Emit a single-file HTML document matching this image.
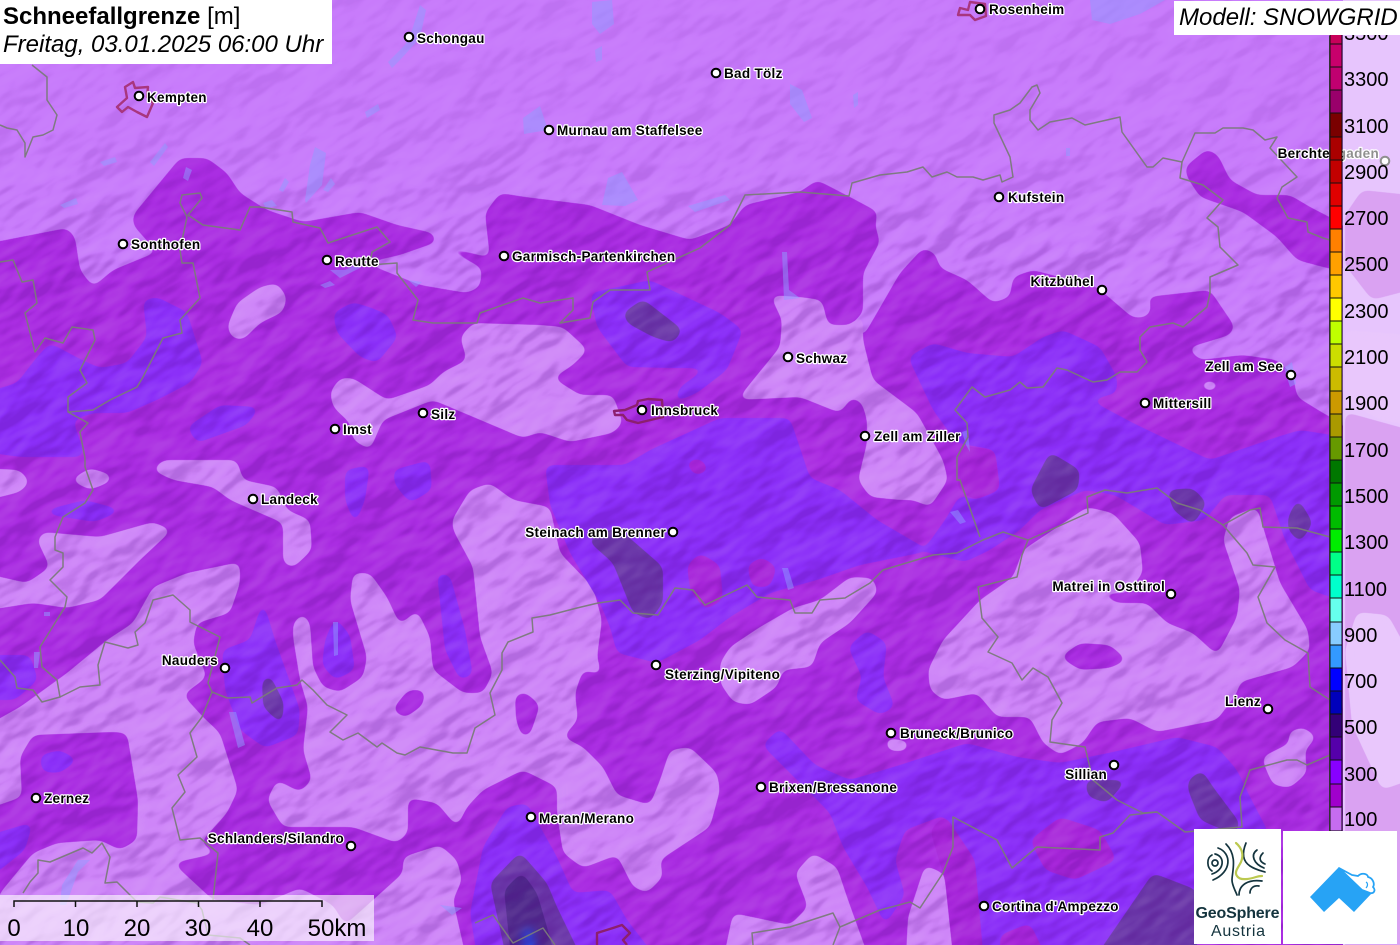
<!DOCTYPE html>
<html lang="de"><head><meta charset="utf-8"><title>Schneefallgrenze</title>
<style>
html,body{margin:0;padding:0;background:#c87bfb;overflow:hidden;width:1400px;height:945px}
#w{position:relative;width:1400px;height:945px;overflow:hidden;font-family:"Liberation Sans",sans-serif}
svg{position:absolute;left:0;top:0}
.box{position:absolute;background:#fff;color:#000;white-space:nowrap}
.c circle{fill:#fff;stroke:#000;stroke-width:2}
.t text{font:bold 13.5px "Liberation Sans",sans-serif;letter-spacing:.3px;fill:#000;stroke:#fff;stroke-width:2.4px;paint-order:stroke;stroke-linejoin:round}
.b polyline{fill:none;stroke:#7a7a7a;stroke-width:1.5;stroke-linejoin:round;opacity:.95}
.l *{fill:#8f9cff;fill-opacity:.5;stroke:none}
.cb rect{stroke:#111;stroke-width:1}
.lab text{font:20px "Liberation Sans",sans-serif;fill:#000}
.sc text{font:24px "Liberation Sans",sans-serif;fill:#000;text-anchor:middle}
</style></head><body><div id="w">
<svg width="1400" height="945" viewBox="0 0 1400 945" xmlns="http://www.w3.org/2000/svg">
<defs>
<filter id="g" filterUnits="userSpaceOnUse" x="-60" y="-60" width="1520" height="1070" color-interpolation-filters="sRGB">
<feGaussianBlur stdDeviation="4.4"/><feComponentTransfer><feFuncA type="linear" slope="14" intercept="-6.5"/></feComponentTransfer>
</filter>
<filter id="hd" x="0" y="0" width="1" height="1" color-interpolation-filters="sRGB">
<feTurbulence type="fractalNoise" baseFrequency=".016 .03" numOctaves="3" seed="11" result="n"/>
<feDiffuseLighting in="n" surfaceScale="7" diffuseConstant="1" lighting-color="#fff"><feDistantLight azimuth="270" elevation="30"/></feDiffuseLighting>
<feColorMatrix values="0 0 0 0 .3  0 0 0 0 0  0 0 0 0 .5  -3 0 0 0 1.5"/>
</filter>
<filter id="hl" x="0" y="0" width="1" height="1" color-interpolation-filters="sRGB">
<feTurbulence type="fractalNoise" baseFrequency=".016 .03" numOctaves="3" seed="11" result="n"/>
<feDiffuseLighting in="n" surfaceScale="7" diffuseConstant="1" lighting-color="#fff"><feDistantLight azimuth="270" elevation="30"/></feDiffuseLighting>
<feColorMatrix values="0 0 0 0 1  0 0 0 0 1  0 0 0 0 1  3 0 0 0 -1.5"/>
</filter>
<pattern id="pd" patternUnits="userSpaceOnUse" x="-300" y="-500" width="2000" height="1950" patternTransform="rotate(-32 700 470)">
<rect x="0" y="0" width="2000" height="1950" fill="#000" filter="url(#hd)"/>
</pattern>
<pattern id="pl" patternUnits="userSpaceOnUse" x="-300" y="-500" width="2000" height="1950" patternTransform="rotate(-32 700 470)">
<rect x="0" y="0" width="2000" height="1950" fill="#000" filter="url(#hl)"/>
</pattern>
<linearGradient id="gr" x1="0" y1="0" x2="0" y2="1"><stop offset="0" stop-color="#fff" stop-opacity=".35"/><stop offset=".14" stop-color="#fff" stop-opacity=".45"/><stop offset=".28" stop-color="#fff" stop-opacity="1"/><stop offset="1" stop-color="#fff" stop-opacity="1"/></linearGradient>
<mask id="m" maskUnits="userSpaceOnUse" x="0" y="0" width="1400" height="945"><rect width="1400" height="945" fill="url(#gr)"/></mask>
</defs>
<rect width="1400" height="945" fill="#c87bfb"/>
<!-- level 200 -->
<g filter="url(#g)" fill="#aa2de2">
<polygon points="-30,247 67,228 75,237 80,270 93,287 113,270 157,252 133,225 133,215 180,158 207,158 227,173 240,193 267,210 303,222 360,212 397,225 433,233 437,242 400,255 365,263 420,285 467,293 480,287 482,268 448,250 450,247 490,258 485,213 500,193 525,197 590,205 640,225 690,240 730,225 745,205 800,192 817,180 850,197 878,212 875,225 880,242 863,273 863,313 850,325 863,337 900,273 923,248 935,253 940,268 967,280 993,303 1010,297 1013,277 1033,270 1097,287 1133,318 1147,317 1152,308 1147,297 1210,290 1235,327 1230,335 1187,348 1200,360 1243,355 1277,360 1293,375 1297,397 1323,413 1345,425 1345,975 -30,975"/>
<polygon points="1185,167 1207,149 1218,155 1230,180 1257,195 1290,195 1310,207 1345,225 1345,272 1323,267 1297,260 1277,237 1243,212 1200,197 1187,177"/>
</g>
<!-- level 100 holes -->
<g filter="url(#g)" fill="#ce85f8">
<polygon points="227,327 237,303 260,287 277,283 287,297 283,312 260,323 243,340 232,338"/>
<polygon points="330,392 340,378 353,378 387,400 430,385 443,372 467,360 460,337 473,323 540,325 563,327 588,350 573,365 553,378 580,395 613,395 623,423 613,433 570,442 540,432 523,438 433,400 383,420 370,450 353,440 350,423 333,407"/>
<polygon points="770,295 800,297 822,300 828,325 850,325 863,313 863,340 873,380 917,413 943,460 948,480 930,507 913,500 900,500 870,497 858,480 867,443 867,420 862,403 852,397 840,413 800,397 737,400 753,380 780,347 782,320"/>
<polygon points="1197,385 1210,380 1222,385 1210,392"/>
<polygon points="-20,468 20,470 30,482 20,492 -20,502"/>
<polygon points="70,480 90,468 112,475 110,482 90,490"/>
<polygon points="152,470 163,460 237,460 243,480 277,487 287,510 310,520 312,550 293,568 283,563 283,523 253,510 230,500 213,487 173,480"/>
<polygon points="-30,570 27,583 50,567 37,540 43,532 100,537 153,522 172,530 140,560 100,600 67,608 33,603 -30,613"/>
<polygon points="-30,735 20,707 67,673 107,640 133,623 153,587 187,573 240,562 240,583 230,613 197,623 193,643 207,677 183,695 203,717 220,733 238,790 227,813 200,843 218,853 173,863 213,900 260,905 300,888 333,905 345,925 373,900 403,873 403,857 440,845 457,860 462,880 453,900 470,975 -30,975 0,893 33,853 57,843 100,840 120,850 137,840 138,800 127,733 113,732 33,735 20,757 22,797 -30,815"/>
<polygon points="293,623 303,613 310,623 313,667 323,687 340,692 363,677 367,657 350,600 353,573 370,573 387,597 400,625 417,610 430,637 433,670 463,693 483,693 493,673 480,637 473,567 453,530 452,520 470,490 490,483 513,500 550,507 560,553 593,587 602,620 597,657 602,675 583,670 575,693 578,720 563,737 583,747 603,767 617,795 650,805 660,780 670,750 690,747 717,773 720,790 710,827 660,860 663,877 647,893 633,887 617,855 583,868 563,853 557,813 557,787 523,770 483,790 467,807 457,827 437,803 408,798 408,833 397,843 353,827 283,827 267,800 277,780 300,792 312,780 303,750 308,707 300,680 293,637"/>
<polygon points="720,663 730,647 760,627 793,608 820,600 850,577 873,578 878,592 850,623 820,643 812,667 783,670 777,687 750,705 733,702 720,683"/>
<polygon points="928,670 943,640 980,600 1013,577 1023,550 1053,530 1087,507 1113,513 1140,543 1143,573 1127,593 1097,593 1117,603 1147,603 1167,623 1193,633 1217,655 1237,617 1240,590 1223,540 1230,517 1257,507 1267,540 1280,583 1308,630 1310,650 1293,667 1240,682 1237,693 1217,720 1157,732 1130,718 1097,722 1083,743 1060,755 1043,743 1030,717 997,717 977,693 943,700 930,690"/>
<polygon points="1262,757 1290,743 1288,732 1303,727 1317,737 1305,750 1307,773 1290,788 1273,785 1265,767"/>
<polygon points="908,917 925,865 943,873 958,903 965,975 905,975"/>
<polygon points="720,975 733,913 790,925 808,907 795,873 813,853 837,867 847,897 875,975"/>
<polygon points="885,738 909,741 907,751 888,751"/>
</g>
<g filter="url(#g)" fill="#aa2de2">
<polygon points="392,710 408,690 425,690 423,705 405,718"/>
<polygon points="515,695 525,692 540,705 530,735 522,737 516,720"/>
<polygon points="1060,657 1080,643 1110,645 1127,660 1110,668 1080,670"/>
</g>
<!-- level 300 -->
<g filter="url(#g)" fill="#8b2ff8">
<polygon points="17,383 37,357 50,343 82,360 100,368 127,363 147,337 143,300 157,297 187,312 203,363 190,383 157,400 127,413 93,413 73,420 83,450 83,457 20,457 -30,450 -30,397"/>
<polygon points="333,313 353,302 372,308 388,315 398,337 377,363 360,357 337,333"/>
<polygon points="187,427 220,405 260,407 247,425 197,443"/>
<polygon points="345,470 370,465 365,500 355,525 345,500"/>
<polygon points="393,470 430,460 432,490 410,503 395,485"/>
<polygon points="45,510 85,500 123,510 95,522 50,515"/>
<polygon points="-20,655 30,655 38,680 15,700 -20,700"/>
<polygon points="263,600 275,640 300,710 298,735 265,748 240,730 225,690 222,650 250,640"/>
<polygon points="325,640 335,617 350,635 355,670 335,680 322,665"/>
<polygon points="437,573 450,575 465,630 473,675 460,680 445,650"/>
<polygon points="40,755 60,750 78,760 60,773 42,772"/>
<polygon points="-20,838 33,822 25,850 0,870 -20,880"/>
<polygon points="590,293 650,280 720,313 743,330 727,370 697,393 673,403 680,387 707,368 673,368 627,367 597,327"/>
<polygon points="545,465 625,465 650,450 720,418 790,418 810,478 840,490 877,520 925,548 945,520 960,495 975,500 1000,490 995,450 957,443 933,410 908,357 933,343 967,353 1013,357 1043,337 1063,330 1100,347 1117,377 1117,393 1090,400 1133,423 1210,460 1277,437 1300,430 1345,437 1345,602 1310,590 1285,540 1270,495 1225,495 1205,520 1165,525 1115,495 1085,490 1040,510 1020,530 990,550 965,562 925,552 860,565 817,580 770,593 730,617 700,640 657,663 617,653 610,627 600,603 570,553 550,505"/>
<polygon points="762,745 780,728 815,765 850,780 900,765 967,743 1017,757 1060,763 1113,752 1177,737 1217,747 1237,770 1250,797 1270,835 1197,835 1197,975 985,975 975,880 945,815 905,830 895,860 905,895 885,925 867,887 843,847 830,813"/>
<polygon points="848,647 867,630 887,643 883,677 895,707 880,715 855,700 862,677"/>
<polygon points="470,913 483,847 507,807 527,803 557,857 573,893 610,890 627,920 670,975 480,975"/>
</g>
<!-- pink patches within violet -->
<g filter="url(#g)" fill="#a726da">
<polygon points="687,565 700,553 720,565 723,600 705,610 690,590"/>
<polygon points="747,565 762,557 777,567 770,587 752,587"/>
<polygon points="685,462 700,458 710,470 695,476"/>
<polygon points="1030,840 1060,817 1100,830 1117,860 1075,880 1045,870"/>
<polygon points="1000,935 1030,923 1055,975 1000,975"/>
<polygon points="930,830 945,815 975,860 985,975 955,975 945,880"/>
<polygon points="958,445 995,450 1000,490 975,500 958,490"/>
</g>
<!-- dark -->
<g filter="url(#g)" fill="#6a36a8">
<polygon points="623,313 643,299 683,330 673,343 653,337 627,323"/>
<polygon points="587,540 617,527 663,567 663,603 650,620 633,613 613,563"/>
<polygon points="262,680 270,675 284,703 282,725 263,707"/>
<polygon points="1030,490 1050,452 1080,470 1078,490 1040,510"/>
<polygon points="1167,490 1193,488 1207,503 1193,525 1173,510"/>
<polygon points="1288,517 1298,498 1313,523 1300,543 1288,530"/>
<polygon points="1085,780 1127,780 1107,803 1088,797"/>
<polygon points="1188,780 1202,770 1213,787 1240,823 1235,835 1200,820 1188,790"/>
<polygon points="1083,975 1153,873 1197,890 1197,975"/>
<polygon points="490,883 520,852 547,883 557,907 590,975 510,975"/>
</g>
<g filter="url(#g)">
<polygon fill="#50298c" points="504,890 522,872 537,893 547,927 560,975 513,975"/>
<polygon fill="#2c47dc" points="523,930 532,928 543,975 518,975"/>
</g>
<!-- hillshade -->
<g mask="url(#m)">
<rect x="0" y="0" width="1345" height="945" fill="url(#pd)" opacity=".2"/>
<rect x="0" y="0" width="1345" height="945" fill="url(#pl)" opacity=".08"/>
</g>
<!-- right panel -->
<rect x="1343" y="0" width="57" height="945" fill="#c87bfb"/>
<g filter="url(#g)" fill="#aa2de2">
<polygon points="1345,215 1362,190 1410,195 1410,290 1372,300 1345,265"/>
<polygon points="1345,412 1410,430 1410,975 1345,975"/>
</g>
<g filter="url(#g)" fill="#cc80f8">
<polygon points="1357,612 1388,615 1410,655 1410,780 1382,790 1352,725 1345,650"/>
<polygon points="1345,330 1410,335 1410,425 1380,420 1345,400"/>
</g>
<!-- lakes -->
<g class="l">
<polygon points="592,2 612,0 614,24 600,34 592,24"/><polygon points="388,62 405,45 412,30 420,5 426,10 420,38 400,60 392,68"/>
<polygon points="1090,0 1165,0 1140,14 1110,24 1092,20"/>
<polygon points="523,118 540,106 548,130 524,134"/><polygon points="365,112 378,104 380,110 367,118"/>
<polygon points="595,50 602,46 602,60 596,62"/><polygon points="790,84 802,90 812,118 804,122 790,104"/>
<polygon points="602,205 608,178 622,172 638,200 625,206"/><polygon points="688,206 725,195 730,200 695,212"/>
<polygon points="100,162 115,157 117,162 104,166"/><polygon points="150,162 165,143 168,147 154,166"/>
<polygon points="183,178 186,167 192,170 188,181"/><polygon points="60,205 76,198 78,204 64,208"/>
<polygon points="263,203 272,200 277,206 266,208"/><polygon points="279,190 285,178 289,182 283,192"/>
<polygon points="305,200 310,165 315,147 326,153 322,185 306,203" fill-opacity=".35"/><polygon points="323,190 331,178 335,184 328,192"/>
<polygon points="330,270 345,270 362,262 360,268 340,278"/><polygon points="320,285 330,281 335,285 325,288"/>
<polygon points="408,280 422,282 416,287"/>
<polygon points="853,95 858,92 858,105 854,108"/>
<polygon points="782,252 787,252 789,290 800,298 784,300"/>
<polygon points="1284,368 1292,362 1296,384 1290,387"/><polygon points="962,432 968,430 970,452 966,445"/>
<polygon points="950,512 958,510 966,522 960,524"/><polygon points="782,568 788,568 794,588 788,590"/>
<polygon points="333,622 338,622 338,655 334,656"/><polygon points="229,712 236,712 245,745 238,748"/>
<polygon points="34,652 40,652 38,668 34,668"/><polygon points="44,612 50,612 50,616 44,616"/>
<polygon points="62,885 78,860 90,860 78,872 66,905 60,905"/><polygon points="1066,148 1070,148 1070,156 1066,156"/>
<polygon points="440,905 462,908 452,915"/>
</g>
<!-- city outlines -->
<g fill="none" stroke-width="2.4" stroke-linejoin="round">
<polygon stroke="#a8367e" points="125,87 133,82 135,88 148,87 147,97 153,103 147,117 137,112 128,107 122,112 117,107 127,98"/>
<polygon stroke="#8c1f6e" points="614,411 625,410 637,405 638,401 648,399 662,400 663,417 638,423 627,420 623,415 615,415"/>
<polygon stroke="#a8367e" points="960,8 968,10 970,2 985,4 986,16 975,20 970,15 958,15"/>
<polyline stroke="#8c1f6e" points="597,945 597,933 613,928 622,925 630,933 623,940 627,945"/>
</g>
<!-- borders -->
<g class="b">
<polyline points="32,65 47,77 47,100 57,115 53,130 43,135 33,137 25,157 25,143 17,130 7,128 0,125"/>
<polyline points="0,262 13,260 22,282 33,280 37,303 25,313 35,352 45,338 63,343 72,327 93,330 95,340 80,370 87,383 68,397 68,412 88,423 80,432 85,458 85,467 93,490 85,503 63,517 55,537 55,550 63,553 63,567 50,580 67,597 65,607 55,623 40,647 42,667 57,680 60,697 42,702 33,690 17,688 15,677 0,660"/>
<polyline points="60,697 80,687 100,685 98,665 105,642 128,648 138,645 135,632 145,623 153,600 173,595 190,610 190,622 220,637 208,683 212,692 202,717 190,733 197,757 178,775 185,792 172,808 180,840 200,838 218,853 213,900"/>
<polyline points="68,412 93,410 110,400 137,387 143,377 163,338 182,333 180,320 200,298 193,263 182,263 180,250 187,217 180,203 182,195 200,193 202,198 188,215 203,225 240,230 250,207 260,207 292,212 293,222 320,228 328,243 377,227 390,242 372,252 370,265 397,263 397,273 418,300 413,320 433,323 477,323 480,313 523,298 540,303 573,298 573,310 560,323 590,318 593,302 610,290 650,290 647,272 700,248 730,225 745,195 800,192 849,196 852,183 880,175 907,172 923,167 932,177 947,172 957,177 973,177 983,180 1000,175 1002,182 1013,177 1010,157 994,123 994,115 1010,110 1020,103 1032,87 1037,85 1040,93 1030,110 1030,120 1038,130 1050,122 1072,118 1085,125 1120,117 1122,132 1147,167 1153,167 1163,158 1182,162 1195,133 1215,133 1223,128 1243,128 1253,130 1265,140 1277,137 1270,148 1297,177 1282,187 1277,198 1288,218 1307,222 1308,232 1323,238 1330,240"/>
<polyline points="1182,162 1180,178 1203,185 1223,200 1207,218 1218,227 1220,247 1238,265 1210,277 1210,293 1207,307 1183,327 1173,323 1150,327 1140,337 1140,350 1147,362 1137,372 1120,372 1107,380 1093,382 1067,370 1057,368 1043,387 1027,388 1020,382 1010,390 985,397 972,387 955,410 967,423 968,437 957,457 957,480 960,480 980,537"/>
<polyline points="212,692 227,698 250,697 252,703 277,688 297,685 302,680 313,690 327,705 347,715 330,732 343,740 358,733 377,747 382,743 397,753 405,755 420,747 453,753 467,753 475,728 495,715 490,693 502,670 502,653 508,642 533,632 532,618 550,615 577,608 598,603 620,600 633,613 658,615 675,588 693,590 705,605 747,585 757,597 790,600 795,613 812,613 820,600 845,598 870,583 883,570 933,555 957,553 983,540 1003,532 1028,540 1022,555 1017,577 978,587 982,618 998,637 988,652 1012,663 1022,680 1033,668 1048,677 1062,703 1052,720 1050,742 1085,747 1093,780 1117,800 1143,813 1157,812 1185,832 1242,827 1240,797 1250,770 1287,760 1297,760 1307,765 1330,755"/>
<polyline points="1028,540 1088,513 1087,497 1105,490 1127,493 1157,488 1177,503 1200,510 1223,525 1250,510 1260,508 1263,527 1297,528 1330,537"/>
<polyline points="1223,525 1247,553 1253,565 1275,567 1258,597 1267,623 1285,640 1308,653 1310,687 1330,700"/>
<polyline points="1157,812 1130,815 1113,833 1100,837 1100,850 1037,847 1012,868 997,840 953,817 953,847 943,873 920,908 910,902 880,910 840,927 833,945"/>
<polyline points="840,927 833,913 790,927 752,933 753,945"/>
<polyline points="475,923 493,915 513,943 543,928 555,945"/>
<polyline points="23,893 30,882 38,873 38,860 50,862 83,848 92,853 102,843 110,857 105,883 117,882 128,893 137,902 153,903 160,897 197,903 202,910 208,935 240,938 250,945"/>
</g>
<!-- labels -->
<g class="t">
<text x="989" y="14">Rosenheim</text><text x="417" y="43">Schongau</text><text x="724" y="78">Bad Tölz</text>
<text x="147" y="102">Kempten</text><text x="557" y="135">Murnau am Staffelsee</text><text x="1008" y="202">Kufstein</text>
<text x="131" y="249">Sonthofen</text><text x="335" y="266">Reutte</text><text x="512" y="261">Garmisch-Partenkirchen</text>
<text x="1094" y="286" text-anchor="end">Kitzbühel</text><text x="796" y="363">Schwaz</text><text x="1283" y="371" text-anchor="end">Zell am See</text>
<text x="1153" y="408">Mittersill</text><text x="431" y="419">Silz</text><text x="343" y="434">Imst</text><text x="651" y="415">Innsbruck</text>
<text x="874" y="441">Zell am Ziller</text><text x="261" y="504">Landeck</text><text x="666" y="537" text-anchor="end">Steinach am Brenner</text>
<text x="1165" y="591" text-anchor="end">Matrei in Osttirol</text><text x="218" y="665" text-anchor="end">Nauders</text><text x="665" y="679">Sterzing/Vipiteno</text>
<text x="1261" y="706" text-anchor="end">Lienz</text><text x="900" y="738">Bruneck/Brunico</text><text x="1107" y="779" text-anchor="end">Sillian</text>
<text x="769" y="792">Brixen/Bressanone</text><text x="44" y="803">Zernez</text><text x="539" y="823">Meran/Merano</text>
<text x="344" y="843" text-anchor="end">Schlanders/Silandro</text><text x="992" y="911">Cortina d'Ampezzo</text><text x="1379" y="158" text-anchor="end">Berchtesgaden</text>
</g>
<g class="c">
<circle cx="980" cy="9" r="4.3"/><circle cx="409" cy="37" r="4.3"/><circle cx="716" cy="73" r="4.3"/><circle cx="139" cy="96" r="4.3"/>
<circle cx="549" cy="130" r="4.3"/><circle cx="999" cy="197" r="4.3"/><circle cx="123" cy="244" r="4.3"/><circle cx="327" cy="260" r="4.3"/>
<circle cx="504" cy="256" r="4.3"/><circle cx="1102" cy="290" r="4.3"/><circle cx="788" cy="357" r="4.3"/><circle cx="1291" cy="375" r="4.3"/>
<circle cx="1145" cy="403" r="4.3"/><circle cx="423" cy="413" r="4.3"/><circle cx="335" cy="429" r="4.3"/><circle cx="642" cy="410" r="4.3"/>
<circle cx="865" cy="436" r="4.3"/><circle cx="253" cy="499" r="4.3"/><circle cx="673" cy="532" r="4.3"/><circle cx="1171" cy="594" r="4.3"/>
<circle cx="225" cy="668" r="4.3"/><circle cx="656" cy="665" r="4.3"/><circle cx="1268" cy="709" r="4.3"/><circle cx="891" cy="733" r="4.3"/>
<circle cx="1114" cy="765" r="4.3"/><circle cx="761" cy="787" r="4.3"/><circle cx="36" cy="798" r="4.3"/><circle cx="531" cy="817" r="4.3"/>
<circle cx="351" cy="846" r="4.3"/><circle cx="984" cy="906" r="4.3"/><circle cx="1385" cy="161" r="4.3"/>
</g>
<!-- right overlay -->
<rect x="1343" y="0" width="57" height="945" fill="#fff" opacity=".56"/>
<!-- colorbar -->
<rect x="1329" y="36" width="1" height="795" fill="#555"/>
<g class="cb">
<rect x="1330" y="30" width="12" height="14" fill="#c8005a"/><rect x="1330" y="44" width="12" height="23" fill="#c8006c"/>
<rect x="1330" y="67" width="12" height="23" fill="#c00070"/><rect x="1330" y="90" width="12" height="23" fill="#99006b"/>
<rect x="1330" y="113" width="12" height="24" fill="#7a0000"/><rect x="1330" y="137" width="12" height="23" fill="#aa0000"/>
<rect x="1330" y="160" width="12" height="23" fill="#c20000"/><rect x="1330" y="183" width="12" height="23" fill="#e00000"/>
<rect x="1330" y="206" width="12" height="23" fill="#ff0000"/><rect x="1330" y="229" width="12" height="23" fill="#ff8000"/>
<rect x="1330" y="252" width="12" height="23" fill="#ffa000"/><rect x="1330" y="275" width="12" height="23" fill="#ffc800"/>
<rect x="1330" y="298" width="12" height="23" fill="#ffff00"/><rect x="1330" y="321" width="12" height="23" fill="#bfff00"/>
<rect x="1330" y="344" width="12" height="23" fill="#ccdd00"/><rect x="1330" y="367" width="12" height="24" fill="#ccbb00"/>
<rect x="1330" y="391" width="12" height="23" fill="#cc9900"/><rect x="1330" y="414" width="12" height="23" fill="#aa9900"/>
<rect x="1330" y="437" width="12" height="23" fill="#669900"/><rect x="1330" y="460" width="12" height="23" fill="#007700"/>
<rect x="1330" y="483" width="12" height="23" fill="#009900"/><rect x="1330" y="506" width="12" height="23" fill="#00bb00"/>
<rect x="1330" y="529" width="12" height="23" fill="#00ee00"/><rect x="1330" y="552" width="12" height="23" fill="#00ff88"/>
<rect x="1330" y="575" width="12" height="23" fill="#00ffcc"/><rect x="1330" y="598" width="12" height="24" fill="#66ffee"/>
<rect x="1330" y="622" width="12" height="23" fill="#88ccff"/><rect x="1330" y="645" width="12" height="23" fill="#3399ff"/>
<rect x="1330" y="668" width="12" height="23" fill="#0000ff"/><rect x="1330" y="691" width="12" height="23" fill="#0000bb"/>
<rect x="1330" y="714" width="12" height="23" fill="#330077"/><rect x="1330" y="737" width="12" height="23" fill="#5500aa"/>
<rect x="1330" y="760" width="12" height="24" fill="#8800ff"/><rect x="1330" y="784" width="12" height="23" fill="#a000cc"/>
<rect x="1330" y="807" width="12" height="24" fill="#c66cf0"/>
</g>
<g class="lab">
<text x="1344" y="40">3500</text><text x="1344" y="86">3300</text><text x="1344" y="133">3100</text><text x="1344" y="179">2900</text>
<text x="1344" y="225">2700</text><text x="1344" y="271">2500</text><text x="1344" y="318">2300</text><text x="1344" y="364">2100</text>
<text x="1344" y="410">1900</text><text x="1344" y="457">1700</text><text x="1344" y="503">1500</text><text x="1344" y="549">1300</text>
<text x="1344" y="596">1100</text><text x="1344" y="642">900</text><text x="1344" y="688">700</text><text x="1344" y="734">500</text>
<text x="1344" y="781">300</text><text x="1344" y="826">100</text>
</g>
<!-- scale -->
<rect x="0" y="895" width="374" height="46" fill="#fff" opacity=".62"/>
<g stroke="#111" stroke-width="1.5" fill="none">
<polyline points="14,907 14,901 322,901 322,907"/>
<line x1="75.5" y1="901" x2="75.5" y2="907"/><line x1="137" y1="901" x2="137" y2="907"/><line x1="198.5" y1="901" x2="198.5" y2="907"/><line x1="260" y1="901" x2="260" y2="907"/>
</g>
<g class="sc">
<text x="14" y="936">0</text><text x="76" y="936">10</text><text x="137" y="936">20</text><text x="198" y="936">30</text><text x="260" y="936">40</text><text x="337" y="936">50km</text>
</g>
<!-- logos -->
<rect x="1194" y="829" width="87" height="115" fill="#fff"/>
<rect x="1283" y="831" width="114" height="113" fill="#fff"/>
<g fill="none" stroke="#14343e" stroke-width="1.7" stroke-linecap="round">
<circle cx="1215" cy="863" r="3"/>
<path d="M1212 855C1206 858 1207 868 1212 871"/>
<path d="M1215 854C1225 856 1225 870 1212 874"/>
<path d="M1218 848C1232 853 1232 872 1213 880"/>
<path d="M1226 844C1238 856 1232 872 1232 880C1232 885 1235 890 1237 895"/>
<path d="M1246 843C1241 855 1244 862 1250 866C1256 870 1262 871 1265 872"/>
<path d="M1257 850C1250 855 1254 864 1264 868"/>
<path d="M1263 853C1258 858 1260 862 1265 864"/>
<path d="M1239 895C1239 885 1248 879 1262 881"/>
<path d="M1250 893C1250 888 1254 885 1259 886"/>
</g>
<path d="M1236 843C1242 848 1244 855 1241 862C1238 868 1234 872 1237 876C1240 881 1250 879 1256 877C1259 876 1261 876 1262 876" fill="none" stroke="#bcc94f" stroke-width="2.2" stroke-linecap="round"/>
<text x="1195.5" y="918" font-family="Liberation Sans" font-weight="bold" font-size="16" textLength="84" lengthAdjust="spacing" fill="#14343e">GeoSphere</text>
<text x="1211" y="936" font-family="Liberation Sans" font-size="16" textLength="54" lengthAdjust="spacing" fill="#14343e">Austria</text>
<polygon fill="#27a3f5" points="1338,868 1310,897 1324,912 1339,898 1354,912 1372,893"/>
<path d="M1339 868L1352 875L1358 876C1362 872 1368 874 1368 877C1373 878 1375 884 1373 887C1376 890 1374 894 1370 893L1362 890Z" fill="#fff" stroke="#27a3f5" stroke-width="1.8" stroke-linejoin="round"/>
<path d="M1366 882c2 1 2 4 0 6" fill="none" stroke="#27a3f5" stroke-width="1.2"/>
</svg>
<div class="box" style="left:0;top:0;width:332px;height:64px;font-size:24px;line-height:28px;padding:0 0 0 3px;box-sizing:border-box">
<div style="margin-top:3px"><b>Schneefallgrenze</b> [m]</div><div><i>Freitag, 03.01.2025 06:00 Uhr</i></div></div>
<div class="box" style="left:1174px;top:1px;width:226px;height:34px;font-size:24px;line-height:33px;padding-left:5px;box-sizing:border-box"><i>Modell: SNOWGRID</i></div>
</div></body></html>
